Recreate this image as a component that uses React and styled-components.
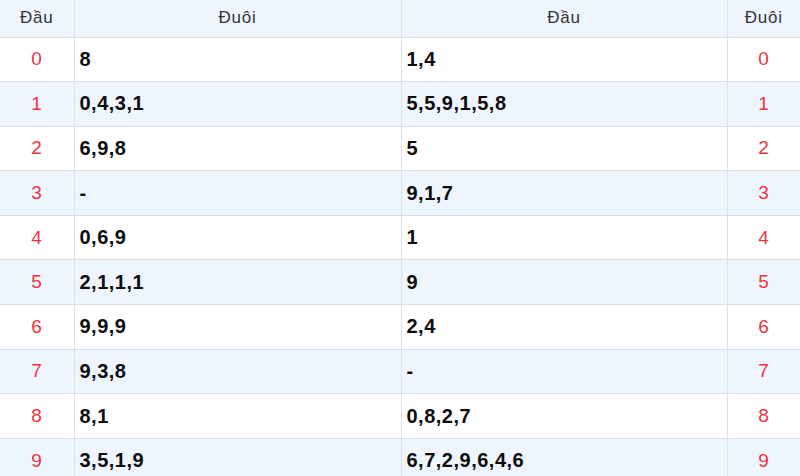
import React from 'react';
import styled, {createGlobalStyle} from 'styled-components';

const GlobalStyle = createGlobalStyle`
    html, body {
        margin: 0;
        padding: 0;
        background: #ffffff;
        overflow: hidden;
    }
    body {
        font-family: "Liberation Sans", Arial, sans-serif;
    }
`

const Table = styled.table`
    width: 800px;
    border-collapse: collapse;
    table-layout: fixed;
`

const HeadRow = styled.tr`
    height: 37px;
    background: #eef5fd;
`

const HeadCell = styled.th`
    font-weight: 400;
    font-size: 17px;
    letter-spacing: 0.8px;
    color: #333333;
    text-align: center;
    padding: 0;
    border-right: 1px solid #dce1e7;
    border-bottom: 1px solid #d9dfe6;
    &:last-child { border-right: none; }
`

const Row = styled.tr`
    height: 44.6px;
    background: ${props => props.$alt ? '#eef5fd' : '#ffffff'};
`

const NumCell = styled.td`
    font-size: 19px;
    letter-spacing: 0.6px;
    color: #ee3340;
    text-align: center;
    padding: 0;
    border-right: 1px solid #dce1e7;
    border-bottom: 1px solid #d9dfe6;
    &:last-child { border-right: none; }
`

const ValueCell = styled.td`
    font-size: 20px;
    font-weight: 700;
    letter-spacing: 0.5px;
    color: #0d0d0d;
    text-align: left;
    padding: 0 0 0 5px;
    border-right: 1px solid #dce1e7;
    border-bottom: 1px solid #d9dfe6;
`

const rows = [
    {tail: '8', head: '1,4'},
    {tail: '0,4,3,1', head: '5,5,9,1,5,8'},
    {tail: '6,9,8', head: '5'},
    {tail: '-', head: '9,1,7'},
    {tail: '0,6,9', head: '1'},
    {tail: '2,1,1,1', head: '9'},
    {tail: '9,9,9', head: '2,4'},
    {tail: '9,3,8', head: '-'},
    {tail: '8,1', head: '0,8,2,7'},
    {tail: '3,5,1,9', head: '6,7,2,9,6,4,6'},
]

export default function App() {
    return (
        <>
            <GlobalStyle />
            <Table>
                <colgroup>
                    <col style={{width: 74}} />
                    <col style={{width: 327}} />
                    <col style={{width: 326}} />
                    <col style={{width: 73}} />
                </colgroup>
                <thead>
                    <HeadRow>
                        <HeadCell>Đầu</HeadCell>
                        <HeadCell>Đuôi</HeadCell>
                        <HeadCell>Đầu</HeadCell>
                        <HeadCell>Đuôi</HeadCell>
                    </HeadRow>
                </thead>
                <tbody>
                    {rows.map((r, i) => (
                        <Row key={i} $alt={i % 2 === 1}>
                            <NumCell>{i}</NumCell>
                            <ValueCell>{r.tail}</ValueCell>
                            <ValueCell>{r.head}</ValueCell>
                            <NumCell>{i}</NumCell>
                        </Row>
                    ))}
                </tbody>
            </Table>
        </>
    )
}
